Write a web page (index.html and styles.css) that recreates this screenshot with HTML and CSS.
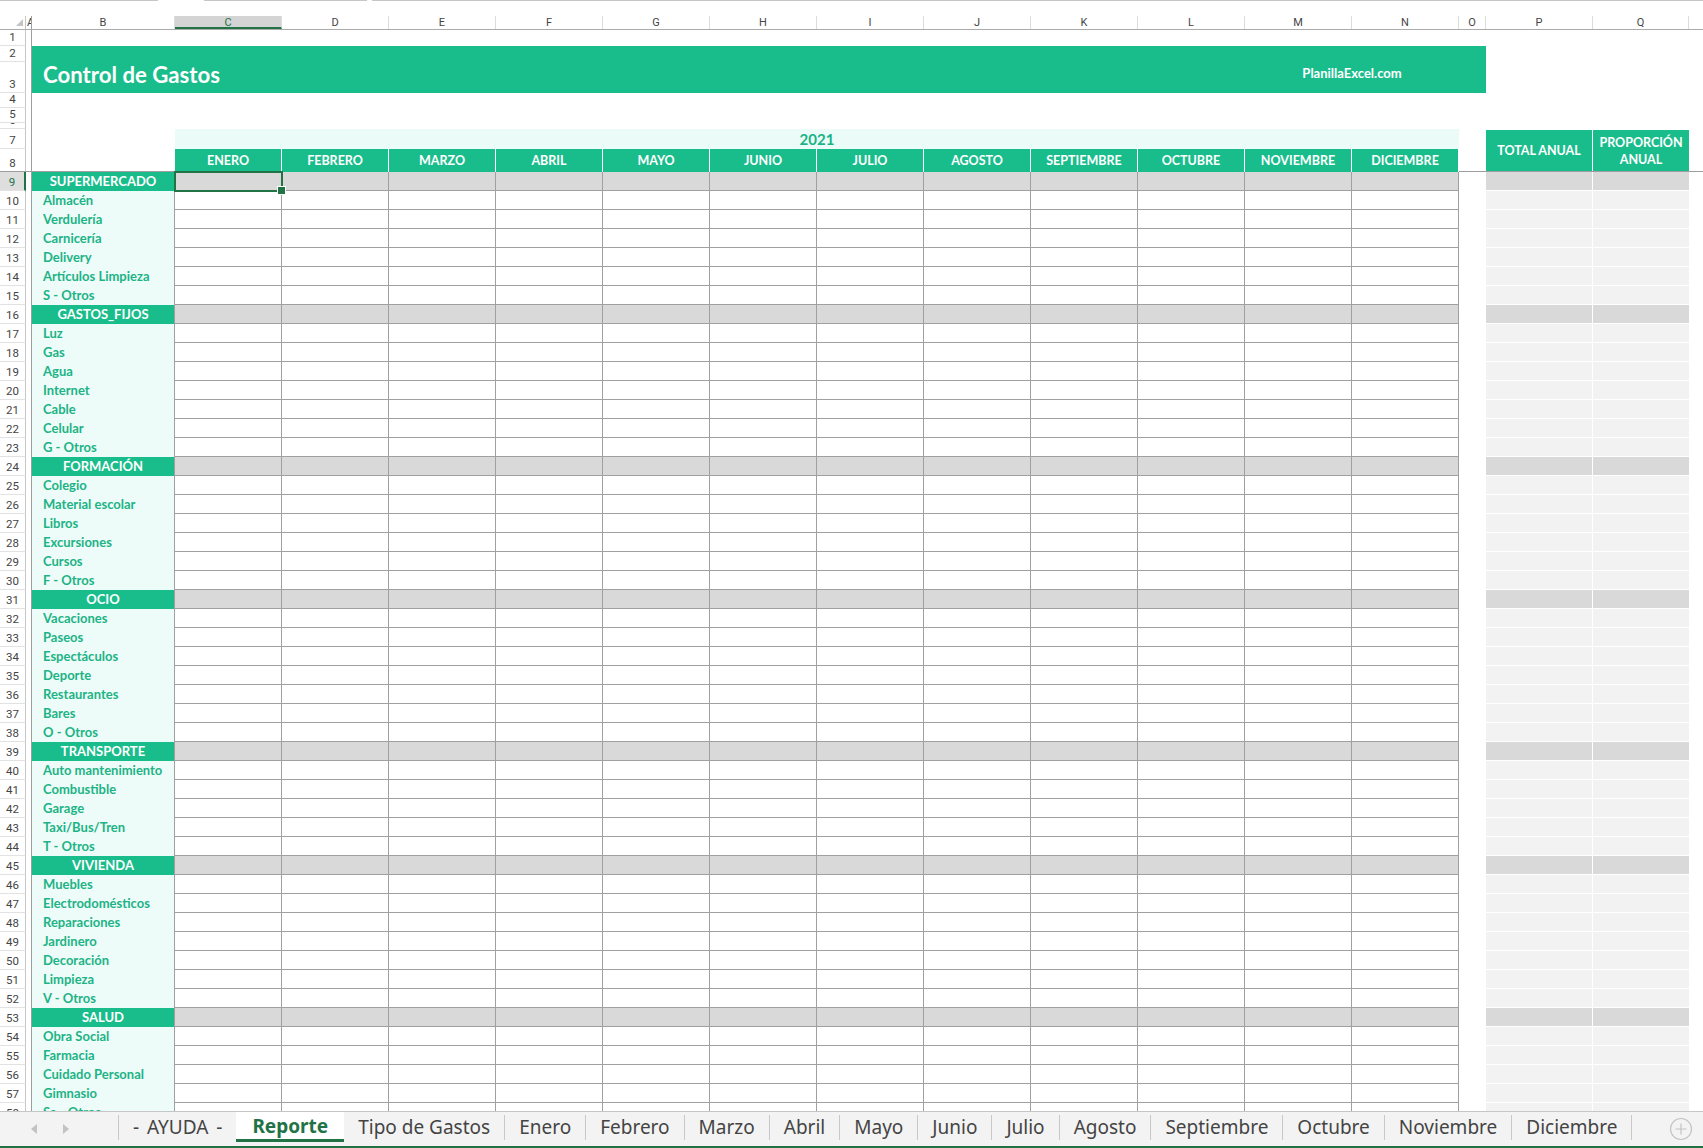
FILE: index.html
```html
<!DOCTYPE html>
<html lang="es">
<head>
    <meta charset="UTF-8">
    <title>Control de Gastos</title>
    <link rel="stylesheet" href="styles.css">
</head>
<body>
<div class="app">
    <div class="topstrip">
        <div class="seg seg1"></div>
        <div class="seg seg2"></div>
        <div class="seg seg3"></div>
    </div>

    <div class="sheet">
        <div class="colheads">
            <div class="ch corner">
                <svg width="25" height="13" viewBox="0 0 25 13"><polygon points="23,3 23,10 16,10" fill="#c4c4c4"/></svg>
            </div>
            <div class="ch cha">A</div>
            <div class="ch">B</div>
            <div class="ch on">C</div>
            <div class="ch">D</div>
            <div class="ch">E</div>
            <div class="ch">F</div>
            <div class="ch">G</div>
            <div class="ch">H</div>
            <div class="ch">I</div>
            <div class="ch">J</div>
            <div class="ch">K</div>
            <div class="ch">L</div>
            <div class="ch">M</div>
            <div class="ch">N</div>
            <div class="ch">O</div>
            <div class="ch">P</div>
            <div class="ch">Q</div>
            <div class="ch last"></div>
        </div>

        <div class="head">
            <div class="rnums">
                <div class="rn">1</div>
                <div class="rn">2</div>
                <div class="rn">3</div>
                <div class="rn">4</div>
                <div class="rn">5</div>
                <div class="rn">6</div>
                <div class="rn">7</div>
                <div class="rn">8</div>
            </div>
            <div class="col-a"></div>
            <div class="band">
                <h1>Control de Gastos</h1>
                <div class="site">PlanillaExcel.com</div>
            </div>
            <div class="year">2021</div>
            <div class="months-h">
                <div class="mh">ENERO</div>
                <div class="mh">FEBRERO</div>
                <div class="mh">MARZO</div>
                <div class="mh">ABRIL</div>
                <div class="mh">MAYO</div>
                <div class="mh">JUNIO</div>
                <div class="mh">JULIO</div>
                <div class="mh">AGOSTO</div>
                <div class="mh">SEPTIEMBRE</div>
                <div class="mh">OCTUBRE</div>
                <div class="mh">NOVIEMBRE</div>
                <div class="mh">DICIEMBRE</div>
            </div>
            <div class="tot">TOTAL ANUAL</div>
            <div class="prop">PROPORCIÓN<br>ANUAL</div>
        </div>

        <div id="filas"></div>
    </div>

    <div class="tabbar">
        <div class="nav">
            <svg width="6" height="10" viewBox="0 0 6 10"><polygon points="6,0 6,10 0,5" fill="#c2c2c2"/></svg>
            <svg width="6" height="10" viewBox="0 0 6 10"><polygon points="0,0 0,10 6,5" fill="#c2c2c2"/></svg>
        </div>
        <i class="sep"></i>
        <div class="tab ayuda">- AYUDA -</div>
        <div class="tab on">Reporte</div>
        <div class="tab">Tipo de Gastos</div>
        <i class="sep"></i>
        <div class="tab">Enero</div>
        <i class="sep"></i>
        <div class="tab">Febrero</div>
        <i class="sep"></i>
        <div class="tab">Marzo</div>
        <i class="sep"></i>
        <div class="tab">Abril</div>
        <i class="sep"></i>
        <div class="tab">Mayo</div>
        <i class="sep"></i>
        <div class="tab">Junio</div>
        <i class="sep"></i>
        <div class="tab">Julio</div>
        <i class="sep"></i>
        <div class="tab">Agosto</div>
        <i class="sep"></i>
        <div class="tab">Septiembre</div>
        <i class="sep"></i>
        <div class="tab">Octubre</div>
        <i class="sep"></i>
        <div class="tab">Noviembre</div>
        <i class="sep"></i>
        <div class="tab">Diciembre</div>
        <i class="sep"></i>
        <svg class="plus" width="24" height="24" viewBox="0 0 24 24">
            <circle cx="12" cy="12" r="10.5" fill="none" stroke="#c4c4c4" stroke-width="1.2"/>
            <path d="M12 6.5V17.5M6.5 12H17.5" stroke="#c4c4c4" stroke-width="1.2"/>
        </svg>
    </div>
    <div class="statusbar"></div>
</div>

<script>
    // categorias y conceptos de la hoja Reporte
    const grupos = [
        ["SUPERMERCADO", ["Almacén", "Verdulería", "Carnicería", "Delivery", "Artículos Limpieza", "S - Otros"]],
        ["GASTOS_FIJOS", ["Luz", "Gas", "Agua", "Internet", "Cable", "Celular", "G - Otros"]],
        ["FORMACIÓN", ["Colegio", "Material escolar", "Libros", "Excursiones", "Cursos", "F - Otros"]],
        ["OCIO", ["Vacaciones", "Paseos", "Espectáculos", "Deporte", "Restaurantes", "Bares", "O - Otros"]],
        ["TRANSPORTE", ["Auto mantenimiento", "Combustible", "Garage", "Taxi/Bus/Tren", "T - Otros"]],
        ["VIVIENDA", ["Muebles", "Electrodomésticos", "Reparaciones", "Jardinero", "Decoración", "Limpieza", "V - Otros"]],
        ["SALUD", ["Obra Social", "Farmacia", "Cuidado Personal", "Gimnasio", "Sa - Otros"]]
    ];

    function fila(num, texto, grupo) {
        const r = document.createElement("div");
        r.className = grupo ? "row grupo" : "row";
        let meses = "";
        for (let i = 0; i < 12; i++) meses += '<div class="c"></div>';
        r.innerHTML =
            `<div class="rn">${num}</div><div class="ca"></div>` +
            `<div class="b">${texto}</div><div class="meses">${meses}</div>` +
            `<div class="o"></div><div class="p"></div><div class="q"></div>`;
        return r;
    }

    const filas = document.getElementById("filas");
    let n = 9;
    grupos.forEach(([titulo, items]) => {
        filas.appendChild(fila(n++, titulo, true));
        items.forEach(t => filas.appendChild(fila(n++, t, false)));
    });

    // celda activa C9
    filas.querySelector(".c").classList.add("sel");
    filas.querySelector(".rn").classList.add("on");
</script>
</body>
</html>
```

FILE: styles.css
```css
* {
    box-sizing: border-box;
}

body {
    margin: 0;
    font-family: Lato, "Open Sans", sans-serif;
    background: #fff;
}

.app {
    width: 1703px;
    height: 1148px;
    display: flex;
    flex-direction: column;
    overflow: hidden;
}

/* restos de la barra de formulas */
.topstrip {
    height: 16px;
    flex-shrink: 0;
    display: flex;
}

.seg {
    height: 1px;
    background: #c6c6c6;
}

.seg1 { width: 158px; }
.seg2 { width: 163px; margin-left: 46px; }
.seg3 { flex: 1; margin-left: 5px; }

.sheet {
    flex: 1;
    min-height: 0;
    overflow: hidden;
}

/* encabezados de columna */
.colheads {
    display: grid;
    grid-template-columns: 26px 6px 143px repeat(12, 107px) 27px 107px 96px 1fr;
    height: 14px;
    border-bottom: 1px solid #ababab;
    font-family: Roboto, sans-serif;
    font-size: 11px;
    color: #444;
}

.ch {
    border-right: 1px solid #dcdcdc;
    text-align: center;
    line-height: 13px;
    overflow: hidden;
}

.ch.corner {
    border-right: 1px solid #c6c6c6;
}

.ch.corner svg {
    display: block;
}

.ch.cha {
    text-align: left;
    padding-left: 1px;
    border-right: 1px solid #9e9e9e;
}

.ch.on {
    background: #d4d4d4;
    border-bottom: 2px solid #217346;
    color: #217346;
}

.ch.last {
    border-right: none;
}

/* filas 1 a 8 */
.head {
    display: grid;
    grid-template-columns: 26px 6px 142px 1285px 27px 107px 96px 1fr;
    grid-template-rows: 16px 16px 31px 15px 15px 6px 20px 22px;
    border-bottom: 1px solid #9e9e9e;
}

.rnums {
    grid-column: 1;
    grid-row: 1 / 9;
    display: grid;
    grid-template-rows: 16px 16px 31px 15px 15px 6px 20px 22px;
}

.head .rnums .rn:last-child {
    border-bottom: none;
}

.col-a {
    grid-column: 2;
    grid-row: 1 / 9;
    border-right: 1px solid #9e9e9e;
}

.band {
    grid-column: 3 / 6;
    grid-row: 2 / 4;
    background: #19bd8b;
    color: #fff;
    display: flex;
    align-items: center;
}

.band h1 {
    flex: 1;
    margin: 0;
    padding: 9px 0 0 11px;
    font-size: 22.2px;
    font-weight: 700;
}

.band .site {
    width: 214px;
    margin-right: 27px;
    padding-top: 6px;
    text-align: center;
    font-size: 13px;
    font-weight: 700;
}

.year {
    grid-column: 4;
    grid-row: 7;
    margin-left: 1px;
    background: #ebfcf8;
    color: #19b386;
    font-size: 15px;
    font-weight: 700;
    text-align: center;
    line-height: 21px;
}

.months-h {
    grid-column: 4;
    grid-row: 8;
    margin-left: 1px;
    display: grid;
    grid-template-columns: repeat(12, 107px);
}

.mh {
    background: #19bd8b;
    border-right: 1px solid #fff;
    color: #fff;
    font-size: 12.5px;
    font-weight: 700;
    text-align: center;
    line-height: 23px;
}

.tot,
.prop {
    grid-row: 7 / 9;
    margin-top: 1px;
    background: #19bd8b;
    color: #fff;
    font-size: 12.5px;
    font-weight: 700;
    line-height: 17px;
    text-align: center;
    display: flex;
    align-items: center;
    justify-content: center;
}

.tot {
    grid-column: 6;
    border-right: 1px solid #fff;
}

.prop {
    grid-column: 7;
}

/* filas de datos */
.row {
    display: grid;
    grid-template-columns: 26px 6px 142px 1285px 27px 107px 96px 1fr;
    height: 19px;
}

.rn {
    border-right: 1px solid #c6c6c6;
    border-bottom: 1px solid #e2e2e2;
    font-family: Roboto, sans-serif;
    font-size: 11.5px;
    color: #444;
    display: flex;
    align-items: flex-end;
    justify-content: center;
    line-height: 14px;
    padding-bottom: 1px;
    overflow: hidden;
}

.rn.on {
    background: #dedede;
    border-right: 2px solid #217346;
    color: #217346;
}

.ca {
    border-right: 1px solid #9e9e9e;
}

.b {
    background: #edfcf8;
    color: #1db386;
    font-size: 13px;
    font-weight: 700;
    line-height: 19px;
    padding-left: 11px;
    white-space: nowrap;
    overflow: hidden;
}

.grupo .b {
    background: #19bd8b;
    color: #fff;
    text-align: center;
    padding-left: 0;
}

.meses {
    display: grid;
    grid-template-columns: repeat(12, 107px);
    border-left: 1px solid #a0a0a0;
}

.c {
    border-right: 1px solid #a0a0a0;
    border-bottom: 1px solid #a0a0a0;
}

.grupo .c {
    background: #d9d9d9;
}

.c.sel {
    position: relative;
    z-index: 1;
    outline: 2px solid #217346;
    outline-offset: -1px;
}

.c.sel::after {
    content: "";
    position: absolute;
    right: -5px;
    bottom: -5px;
    width: 7px;
    height: 7px;
    background: #217346;
    border: 1px solid #fff;
}

.p,
.q {
    background: #f2f2f2;
    border-bottom: 1px solid #fff;
}

.p {
    border-right: 1px solid #fff;
}

.grupo .p,
.grupo .q {
    background: #d9d9d9;
}

/* pestañas de hojas */
.tabbar {
    height: 35px;
    flex-shrink: 0;
    border-top: 1px solid #c6c6c6;
    background: #f3f3f3;
    display: flex;
    align-items: flex-start;
    font-family: "Noto Sans", sans-serif;
    font-size: 19px;
    color: #444;
}

.nav {
    width: 118px;
    height: 34px;
    display: flex;
    align-items: center;
    gap: 26px;
    padding-left: 31px;
}

.sep {
    width: 1px;
    height: 25px;
    margin-top: 3px;
    background: #c8c8c8;
}

.tab {
    height: 30px;
    line-height: 30px;
    padding: 0 14px;
    white-space: nowrap;
}

.tab.ayuda {
    word-spacing: 3px;
}

.tab.on {
    background: #fff;
    border-bottom: 3px solid #217346;
    color: #217346;
    font-weight: 700;
    line-height: 28px;
    padding: 0 16px;
}

.plus {
    margin: 5px 10px 0 auto;
}

.statusbar {
    height: 2px;
    flex-shrink: 0;
    background: #217346;
}
```
